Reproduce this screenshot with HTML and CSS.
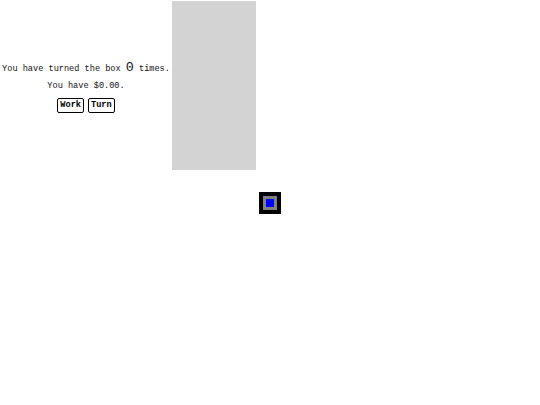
FILE: index.html
```html
<!DOCTYPE html>
<html>
<head>
<meta charset="utf-8">
<link rel="stylesheet" href="styles.css">
</head>
<body>
<div class="top">
  <div class="info">
    <p class="line">You have turned the box <span class="count">0</span> times.</p>
    <p class="line">You have $0.00.</p>
    <div class="buttons">
      <button class="btn">Work</button>
      <button class="btn">Turn</button>
    </div>
  </div>
  <div class="panel"></div>
</div>
<div class="stage">
  <div class="box"><div class="inner"></div></div>
</div>
</body>
</html>
```
FILE: styles.css
```css
html, body {
  margin: 0;
  padding: 0;
  background: #ffffff;
}
body {
  font-family: "Liberation Mono", "DejaVu Sans Mono", monospace;
  font-size: 8.6px;
  color: #111111;
}
.top {
  display: flex;
  align-items: center;
}
.info {
  width: 172px;
  display: flex;
  flex-direction: column;
  align-items: center;
  gap: 7px;
  padding-top: 5px;
}
.line {
  margin: 0;
  white-space: nowrap;
  line-height: 10px;
}
.count {
  font-size: 13.3px;
}
.buttons {
  display: flex;
  gap: 4px;
}
.btn {
  font-family: "Liberation Mono", "DejaVu Sans Mono", monospace;
  font-size: 8.6px;
  font-weight: bold;
  background: #ffffff;
  color: #000000;
  border: 1px solid #000000;
  border-radius: 2px;
  padding: 1px 2px;
  height: 15px;
  line-height: 10px;
}
.panel {
  width: 84px;
  height: 169px;
  margin-top: 1px;
  background: #d3d3d3;
}
.stage {
  display: flex;
  justify-content: center;
  padding-top: 22px;
}
.box {
  width: 14px;
  height: 14px;
  border: 4px solid #000000;
  background: #808080;
  padding: 0;
  display: flex;
  align-items: center;
  justify-content: center;
}
.inner {
  width: 8px;
  height: 8px;
  background: #0000ff;
}
```
